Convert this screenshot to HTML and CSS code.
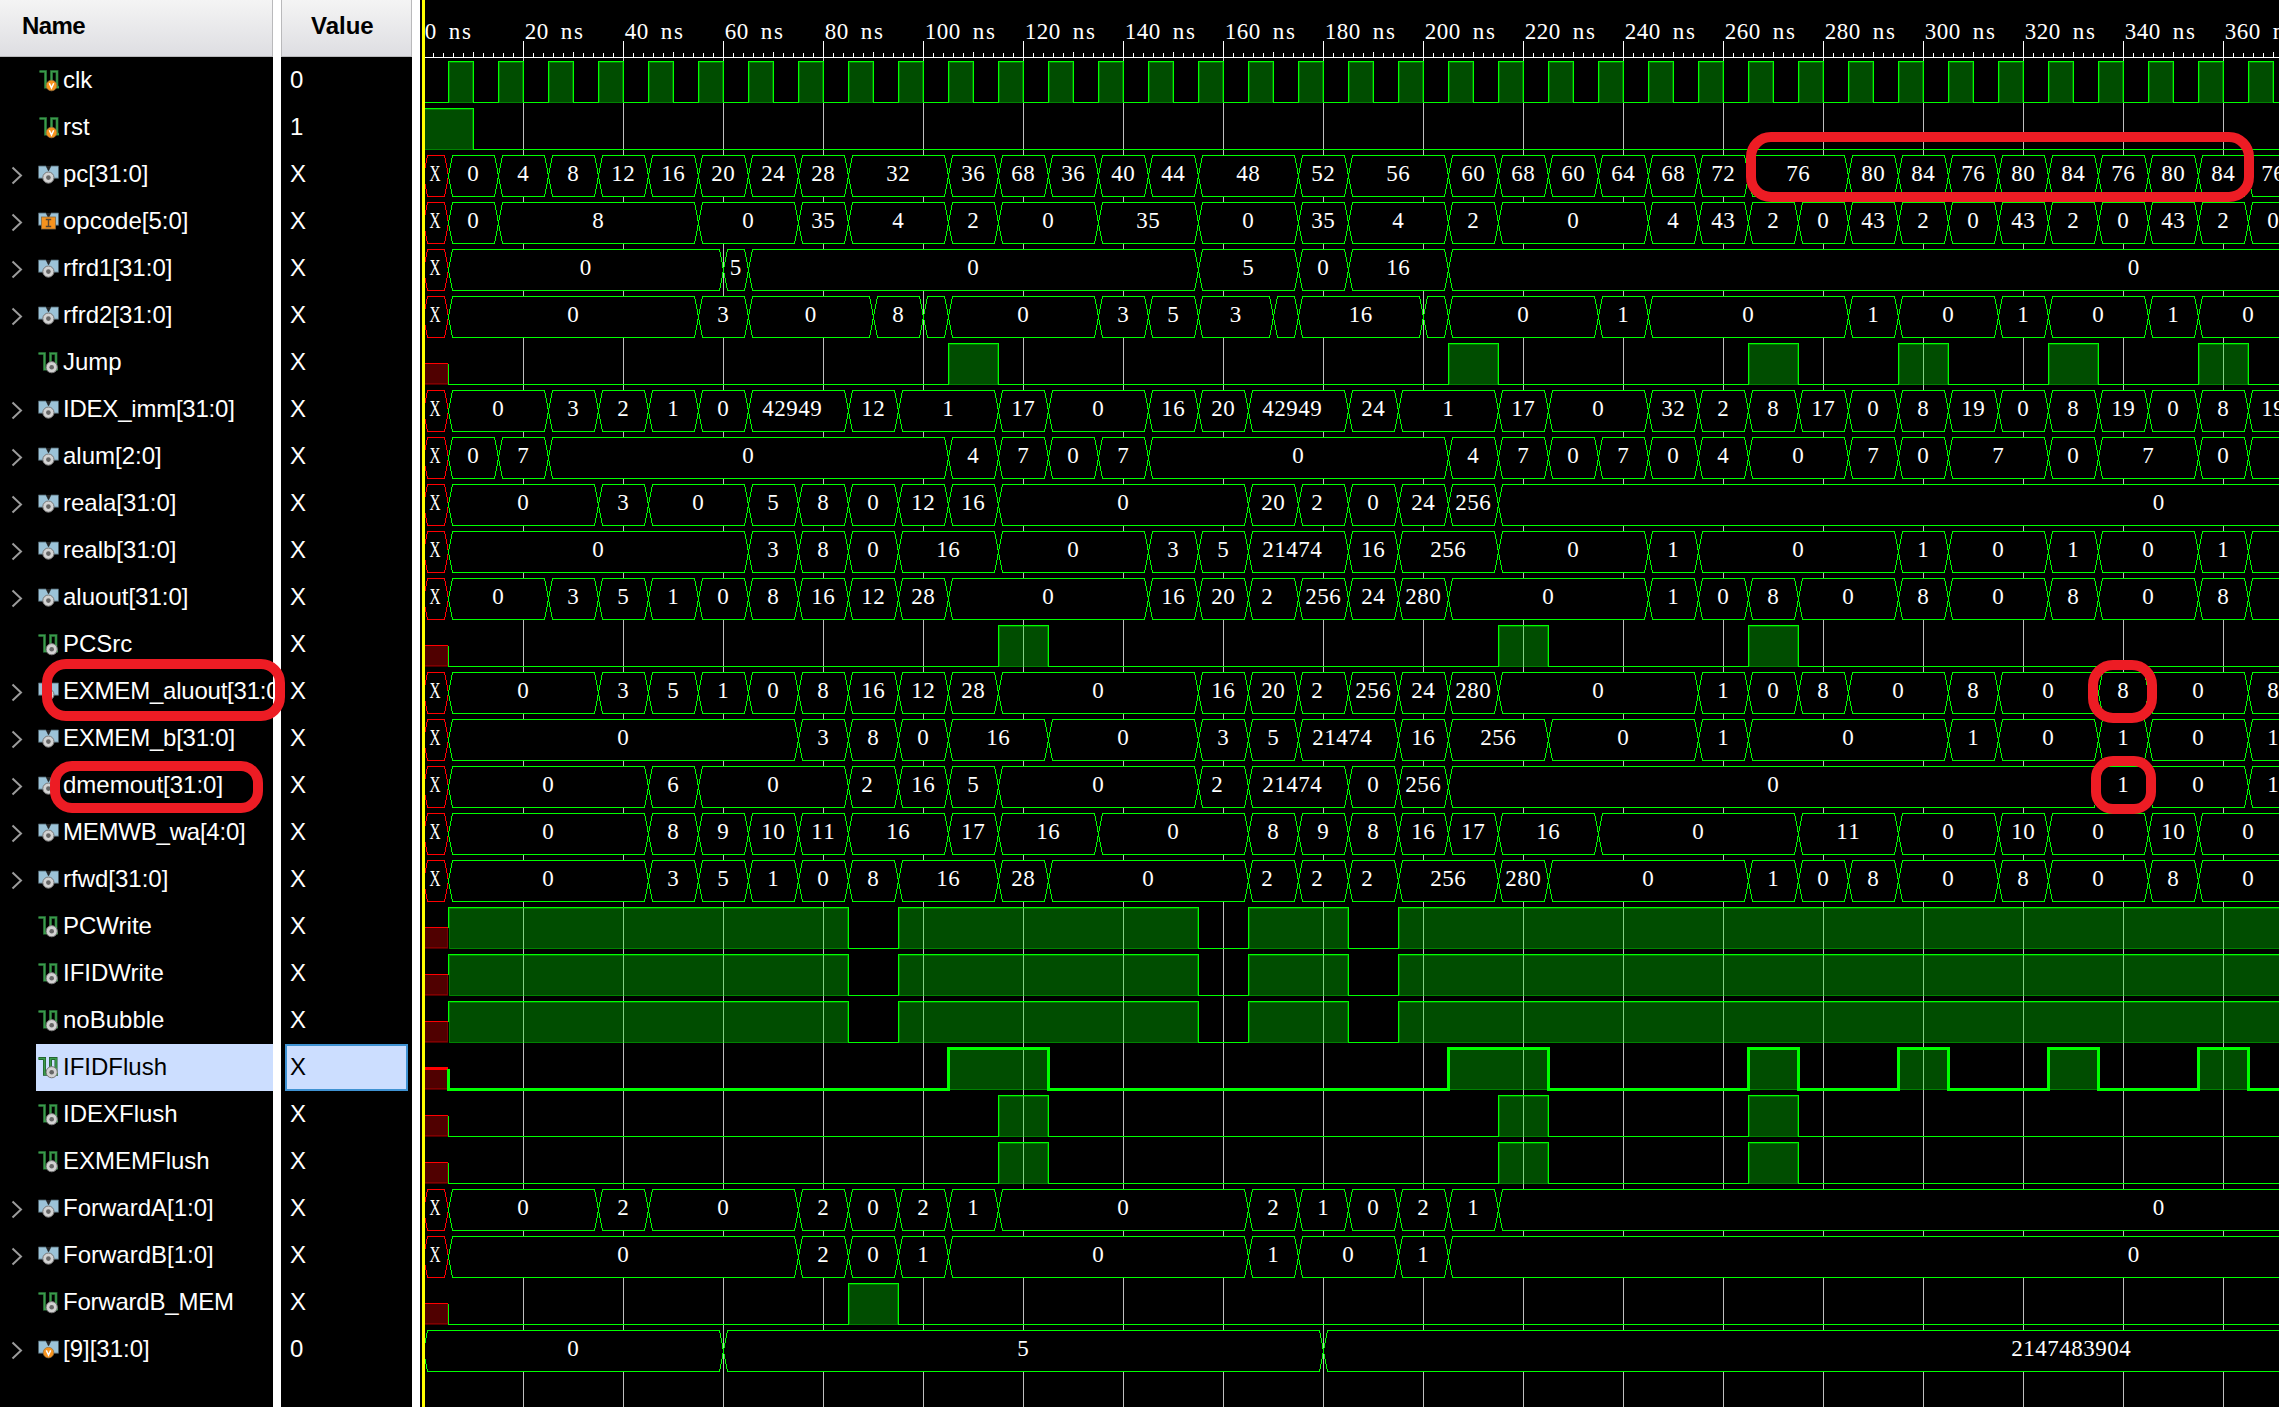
FILE: index.html
```html
<!DOCTYPE html>
<html lang="en">
<head>
<meta charset="utf-8">
<title>Waveform</title>
<link rel="stylesheet" href="styles.css">
</head>
<body>
<svg class="defs" width="0" height="0" aria-hidden="true">
  <defs>
    <g id="wave">
      <path d="M.5 4.5h6v15.7h6V4.5h5.5v15.7h2" fill="none" stroke="#1d5529" stroke-width="3"/>
      <path d="M.5 4.5h6v15.7h6V4.5h5.5v15.7h2" fill="none" stroke="#3a9c4b" stroke-width="1.7"/>
    </g>
    <g id="bus">
      <path d="M.5 5h7.6l2.4 5 2.4-5h7.6v12.2H.5z" fill="#9cc3d8" stroke="#4d5f69" stroke-width=".8"/>
      <path d="M8.1 5h4.8l-2.4 5z" fill="#222"/>
    </g>
    <g id="gear">
      <circle r="5.6" fill="#d2d2d2" stroke="#777" stroke-width="1"/>
      <circle r="2.3" fill="#666"/>
    </g>
    <g id="vee">
      <circle r="5.3" fill="#f7931e" stroke="#9a7440" stroke-width=".8"/>
      <path d="M-2.2-2.2 0 2.4 2.2-2.2" fill="none" stroke="#fff" stroke-width="1.5"/>
    </g>
    <symbol id="i-sig-v" viewBox="0 0 22 26"><use href="#wave" x="1"/><use href="#vee" x="13.5" y="18.5"/></symbol>
    <symbol id="i-sig" viewBox="0 0 22 26"><use href="#wave"/><use href="#gear" x="13.7" y="18.2"/></symbol>
    <symbol id="i-bus" viewBox="0 0 22 26"><use href="#bus"/><use href="#gear" x="10.4" y="16.6"/></symbol>
    <symbol id="i-bus-v" viewBox="0 0 22 26"><use href="#bus"/><use href="#vee" x="10.5" y="16.6"/></symbol>
    <symbol id="i-bus-i" viewBox="0 0 22 26"><use href="#bus"/>
      <rect x="3.5" y="9" width="14" height="12" fill="#f7931e" stroke="#8a6a3c" stroke-width=".8"/>
      <path d="M7.8 11.5h5.4M7.8 18.5h5.4M10.5 11.5v7" fill="none" stroke="#5a4630" stroke-width="1.4"/>
    </symbol>
  </defs>
</svg>
<main class="viewer">
  <section class="column names">
    <h2 class="head">Name</h2>
    <div id="names"></div>
  </section>
  <section class="column values">
    <h2 class="head">Value</h2>
    <div id="values"></div>
  </section>
  <section class="waves">
    <svg id="plot" width="1859" height="1407" viewBox="420 0 1859 1407"></svg>
  </section>
  <div class="mark mark-exmem"></div>
  <div class="mark mark-dmem"></div>
  <div class="mark mark-pc"></div>
  <div class="mark mark-eight"></div>
  <div class="mark mark-one"></div>
</main>
<script src="waves.js"></script>
</body>
</html>
```
FILE: styles.css
```css
body {
  margin: 0;
  background: #000;
  overflow: hidden;
}

.defs {
  position: absolute;
}

.viewer {
  position: relative;
  display: flex;
  width: 2279px;
  height: 1407px;
  overflow: hidden;
  background: #fff;
  font-family: "Liberation Sans", Arial, sans-serif;
  font-size: 24px;
  color: #fff;
}

.column {
  box-sizing: border-box;
  flex: none;
  overflow: hidden;
  background: #000;
}

.names {
  width: 273px;
  margin-right: 8px;
}

.values {
  width: 131px;
  margin-right: 8px;
}

.head {
  box-sizing: border-box;
  height: 57px;
  margin: 0;
  padding-left: 22px;
  border-right: 1px solid #b9b9bb;
  border-bottom: 1px solid #b9b9bb;
  background: linear-gradient(#f4f4f4, #dedee2);
  color: #000;
  font-size: 24px;
  font-weight: bold;
  line-height: 51px;
  letter-spacing: -0.6px;
}

.values .head {
  padding-left: 29px;
  border-left: 1px solid #b9b9bb;
  letter-spacing: 0;
}

.row {
  display: flex;
  box-sizing: border-box;
  height: 47px;
  line-height: 46px;
  white-space: pre;
}

.expander {
  flex: none;
  width: 36px;
  height: 47px;
}

.expander path {
  fill: none;
  stroke: #9b9b9b;
  stroke-width: 2;
}

.signal {
  display: flex;
  flex: none;
  width: 237px;
  overflow: hidden;
}

.tight {
  letter-spacing: -0.22px;
}

.icon {
  flex: none;
  width: 22px;
  height: 26px;
  margin: 10px 3px 0 2px;
}

.selected .signal {
  background: #ccdeff;
  color: #000;
}

.value {
  box-sizing: border-box;
  width: 123px;
  margin-left: 4px;
  padding-left: 5px;
}

.selected .value {
  padding-left: 3px;
  border: 2px solid #3f92d2;
  background: #ccdeff;
  color: #000;
  line-height: 42px;
}

.waves {
  flex: none;
  width: 1859px;
  background: #000;
}

#plot {
  display: block;
  shape-rendering: crispEdges;
}

#plot text {
  fill: #fff;
  font-family: "Liberation Serif", "Times New Roman", serif;
  font-size: 23px;
  text-anchor: middle;
}

.cursor { fill: #ff0; }
.tick { stroke: #fff; }
.grid { stroke: #bebebe; }
.line { fill: none; stroke: #0f0; }
.cell { fill: #000; stroke: #0f0; }
.cell.unknown { stroke: #f00; }
.fill { fill: #0f0; fill-opacity: .3; }
.inner { fill: none; stroke: #0f0; stroke-opacity: .3; }
.fill-x { fill: #500000; }
.base-x { fill: none; stroke: #800000; }
.line-x { fill: none; stroke: #f00; }
.thick { stroke-width: 3; }

.mark {
  position: absolute;
  box-sizing: border-box;
  border: 10px solid #ed1c24;
}

.mark-exmem { left: 42px; top: 659px; width: 243px; height: 62px; border-radius: 24px; }
.mark-dmem { left: 50px; top: 761px; width: 213px; height: 52px; border-radius: 22px; }
.mark-pc { left: 1746px; top: 132px; width: 508px; height: 70px; border-radius: 25px; }
.mark-eight { left: 2088px; top: 660px; width: 69px; height: 63px; border-radius: 25px; }
.mark-one { left: 2091px; top: 756px; width: 65px; height: 58px; border-radius: 22px; }
```
FILE: waves.js
```js
// Bus entries are "value@start"; a "~" before the value marks one cut off to fit its cell.
// Bit entries list the [start, end] spans where the signal is high.
var END = 479.2;
var ALWAYS = [[5, 85], [95, 155], [165, 185], [195, END]];
var FLUSH = [[115, 125], [215, 225], [265, 275]];
var clock = [];
for (var c = 5; c < 375; c += 10) clock.push([c, c + 5]);

var signals = [
  { name: 'clk', icon: 'sig-v', value: '0', bits: clock, known: true },
  { name: 'rst', icon: 'sig-v', value: '1', bits: [[0, 10]], known: true },
  { name: 'pc[31:0]', bus: '0@5 4@15 8@25 12@35 16@45 20@55 24@65 28@75 32@85 36@105 68@115 36@125 40@135 44@145 48@155 52@175 56@185 60@205 68@215 60@225 64@235 68@245 72@255 76@265 80@285 84@295 76@305 80@315 84@325 76@335 80@345 84@355 76@365 @375' },
  { name: 'opcode[5:0]', icon: 'bus-i', bus: '0@5 8@15 0@55 35@75 4@85 2@105 0@115 35@135 0@155 35@175 4@185 2@205 0@215 4@245 43@255 2@265 0@275 43@285 2@295 0@305 43@315 2@325 0@335 43@345 2@355 0@365 @375' },
  { name: 'rfrd1[31:0]', bus: '0@5 5@60 0@65 5@155 0@175 16@185 0@205' },
  { name: 'rfrd2[31:0]', bus: '0@5 3@55 0@65 8@90 @100 0@105 3@135 5@145 3@155 @170 16@175 @200 0@205 1@235 0@245 1@285 0@295 1@315 0@325 1@345 0@355 @375' },
  { name: 'Jump', bits: [[105, 115], [205, 215], [265, 275], [295, 305], [325, 335], [355, 365]] },
  { name: 'IDEX_imm[31:0]', tight: true, bus: '0@5 3@25 2@35 1@45 0@55 ~42949@65 12@85 1@95 17@115 0@125 16@145 20@155 ~42949@165 24@185 1@195 17@215 0@225 32@245 2@255 8@265 17@275 0@285 8@295 19@305 0@315 8@325 19@335 0@345 8@355 19@365 @375' },
  { name: 'alum[2:0]', bus: '0@5 7@15 0@25 4@105 7@115 0@125 7@135 0@145 4@205 7@215 0@225 7@235 0@245 4@255 0@265 7@285 0@295 7@305 0@325 7@335 0@355 @365' },
  { name: 'reala[31:0]', bus: '0@5 3@35 0@45 5@65 8@75 0@85 12@95 16@105 0@115 20@165 ~2@175 0@185 24@195 256@205 0@215' },
  { name: 'realb[31:0]', bus: '0@5 3@65 8@75 0@85 16@95 0@115 3@145 5@155 ~21474@165 16@185 256@195 0@215 1@245 0@255 1@295 0@305 1@325 0@335 1@355 @365' },
  { name: 'aluout[31:0]', bus: '0@5 3@25 5@35 1@45 0@55 8@65 16@75 12@85 28@95 0@105 16@145 20@155 ~2@165 256@175 24@185 280@195 0@205 1@245 0@255 8@265 0@275 8@295 0@305 8@325 0@335 8@355 @365' },
  { name: 'PCSrc', bits: FLUSH },
  { name: 'EXMEM_aluout[31:0]', tight: true, bus: '0@5 3@35 5@45 1@55 0@65 8@75 16@85 12@95 28@105 0@115 16@155 20@165 ~2@175 256@185 24@195 280@205 0@215 1@255 0@265 8@275 0@285 8@305 0@315 8@335 0@345 8@365 @375' },
  { name: 'EXMEM_b[31:0]', tight: true, bus: '0@5 3@75 8@85 0@95 16@105 0@125 3@155 5@165 ~21474@175 16@195 256@205 0@225 1@255 0@265 1@305 0@315 1@335 0@345 1@365 @375' },
  { name: 'dmemout[31:0]', bus: '0@5 6@45 0@55 ~2@85 16@95 5@105 0@115 ~2@155 ~21474@165 0@185 256@195 0@205 1@335 0@345 1@365 @375' },
  { name: 'MEMWB_wa[4:0]', tight: true, bus: '0@5 8@45 9@55 10@65 11@75 16@85 17@105 16@115 0@135 8@165 9@175 8@185 16@195 17@205 16@215 0@235 11@275 0@295 10@315 0@325 10@345 0@355 @375' },
  { name: 'rfwd[31:0]', bus: '0@5 3@45 5@55 1@65 0@75 8@85 16@95 28@115 0@125 ~2@165 ~2@175 ~2@185 256@195 280@215 0@225 1@265 0@275 8@285 0@295 8@315 0@325 8@345 0@355 @375' },
  { name: 'PCWrite', bits: ALWAYS },
  { name: 'IFIDWrite', bits: ALWAYS },
  { name: 'noBubble', bits: ALWAYS },
  { name: 'IFIDFlush', selected: true, bits: [[105, 125], [205, 225], [265, 275], [295, 305], [325, 335], [355, 365]] },
  { name: 'IDEXFlush', bits: FLUSH },
  { name: 'EXMEMFlush', bits: FLUSH },
  { name: 'ForwardA[1:0]', bus: '0@5 2@35 0@45 2@75 0@85 2@95 1@105 0@115 2@165 1@175 0@185 2@195 1@205 0@215' },
  { name: 'ForwardB[1:0]', bus: '0@5 2@75 0@85 1@95 0@105 1@165 0@175 1@195 0@205' },
  { name: 'ForwardB_MEM', tight: true, bits: [[85, 95]] },
  { name: '[9][31:0]', icon: 'bus-v', value: '0', bus: '0@0 5@60 2147483904@180', known: true }
];

function px(t) { return 423.5 + 5 * t; }

function path(cls, d) { return '<path class="' + cls + '" d="' + d + '"/>'; }

// Fixed-pitch text: every character is centred in a 12px cell.
function label(str, left, y) {
  var xs = [];
  for (var i = 0; i < str.length; i++) xs.push(left + 6 + 12 * i);
  return '<text x="' + xs.join(' ') + '" y="' + y + '">' + str + '</text>';
}

function hexagon(a, b, top, cls) {
  var l = px(a), r = px(b), m = top + 20.5, e = top + 41;
  return path(cls, 'M' + l + ' ' + m + 'L' + (l + 4) + ' ' + top + 'H' + (r - 4) + 'L' + r + ' ' + m +
    'L' + (r - 4) + ' ' + e + 'H' + (l + 4) + 'Z');
}

function drawBus(s, top) {
  var out = '';
  if (!s.known) {
    out += hexagon(0, 5, top, 'cell unknown');
    out += '<text x="435" y="' + (top + 25.5) + '" textLength="11" lengthAdjust="spacingAndGlyphs">X</text>';
  }
  var cells = s.bus.split(' ').map(function (c) { return c.split('@'); });
  cells.forEach(function (c, i) {
    var a = +c[1], b = i + 1 < cells.length ? +cells[i + 1][1] : END;
    out += hexagon(a, b, top, 'cell');
    var cut = c[0].charAt(0) === '~', str = cut ? c[0].slice(1) : c[0];
    if (str) out += label(str, (px(a) + px(b)) / 2 - 0.5 - 6 * str.length - (cut ? 6 : 0), top + 25.5);
  });
  return out;
}

function drawBits(s, top) {
  var out = '', low = top + 41, mid = top + 20, d;
  var thick = s.selected ? ' thick' : '';
  s.bits.forEach(function (h) {
    var l = px(h[0]), r = px(h[1]);
    out += '<rect class="fill" x="' + (l + .5) + '" y="' + (top + .5) + '" width="' + (r - l - 1) + '" height="41"/>';
    out += '<rect class="inner" x="' + (l + 1) + '" y="' + (top + 1) + '" width="' + (r - l - 2) + '" height="40"/>';
  });
  if (s.known) {
    d = s.bits[0][0] === 0 ? 'M' + px(0) + ' ' + top : 'M' + px(0) + ' ' + low;
  } else {
    out += '<rect class="fill-x" x="425" y="' + (mid + .5) + '" width="23" height="21"/>';
    out += path('base-x', 'M425 ' + (low - 1) + 'H447.5V' + mid);
    out += path('line-x' + thick, 'M425 ' + mid + 'H448');
    d = 'M' + px(5) + ' ' + mid + (s.bits[0][0] === 5 ? '' : 'V' + low);
  }
  s.bits.forEach(function (h) {
    d += 'H' + px(h[0]) + 'V' + top + 'H' + px(h[1]) + (h[1] < END ? 'V' + low : '');
  });
  if (s.bits[s.bits.length - 1][1] < END) d += 'H' + px(END);
  return out + path('line' + thick, d);
}

var plot = '', t;
for (t = 20; t <= 360; t += 20) plot += path('grid', 'M' + px(t) + ' 58V1407');
for (t = 0; t <= 370; t += 2) {
  if (t) plot += path('tick', 'M' + px(t) + ' ' + (t % 20 === 0 ? 41 : t % 10 === 0 ? 52 : 53) + 'V57');
  if (t % 20 === 0) plot += label(t + ' ns', px(t) + 1, 39);
}
plot += path('tick', 'M422 57.5H2279');
signals.forEach(function (s, i) {
  var top = 61.5 + 47 * i;
  plot += s.bus ? drawBus(s, top) : drawBits(s, top);
});
plot += '<rect class="cursor" x="422" y="0" width="3" height="1407"/>';
document.getElementById('plot').innerHTML = plot;

document.getElementById('names').innerHTML = signals.map(function (s) {
  var icon = s.icon || (s.bus ? 'bus' : 'sig');
  return '<div class="row' + (s.selected ? ' selected' : '') + '">' +
    '<svg class="expander">' + (s.bus ? '<path d="M12.5 16.5l8.5 8-8.5 8"/>' : '') + '</svg>' +
    '<div class="signal"><svg class="icon"><use href="#i-' + icon + '"/></svg><span' +
    (s.tight ? ' class="tight"' : '') + '>' + s.name + '</span></div></div>';
}).join('');
document.getElementById('values').innerHTML = signals.map(function (s) {
  return '<div class="row' + (s.selected ? ' selected' : '') + '"><div class="value">' + (s.value || 'X') + '</div></div>';
}).join('');
```
